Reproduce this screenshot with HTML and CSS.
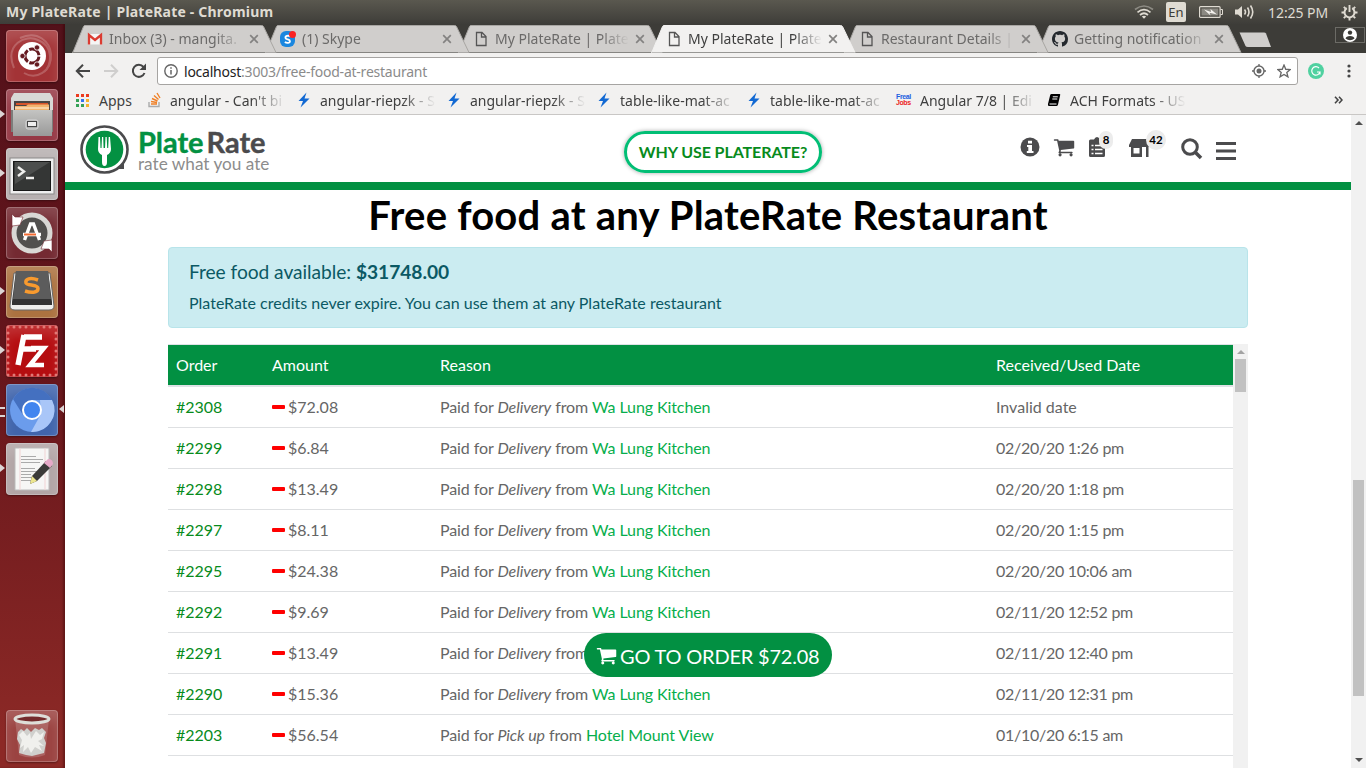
FILE: index.html
```html
<!DOCTYPE html>
<html lang="en">
<head>
<meta charset="utf-8">
<title>My PlateRate | PlateRate</title>
<link rel="stylesheet" href="styles.css">
</head>
<body>
<svg class="defs" width="0" height="0">
  <symbol id="tab" viewBox="0 0 206 28"><path d="M0 27.5 L1 27 L11.500 1.500 Q12 .5 13 .5 H189.500 Q191 .5 191.500 1.500 L204 27.5" /></symbol>
  <symbol id="close" viewBox="0 0 10 10"><path d="M1.200 1.200 L8.800 8.800 M8.800 1.200 L1.200 8.800" fill="none" stroke="currentColor" stroke-width="1.700"/></symbol>
  <symbol id="doc" viewBox="0 0 16 16"><path d="M3.500 1.500 H9 L13 5.500 V14.500 H3.500 Z M8.500 1.500 V6 H13" fill="none" stroke="#555" stroke-width="1.300"/></symbol>
  <symbol id="bolt" viewBox="0 0 14 16"><path d="M9.500 .5 L1.500 9 H6 L3.500 15.500 L12.500 6.500 H7.500 Z" fill="#1269d3"/></symbol>
  <symbol id="cart" viewBox="0 0 1792 1792"><path fill="currentColor" d="M704 1536q0 52-38 90t-90 38-90-38-38-90 38-90 90-38 90 38 38 90zm896 0q0 52-38 90t-90 38-90-38-38-90 38-90 90-38 90 38 38 90zm128-1088v512q0 24-16.500 42.500t-40.500 21.500l-1044 122q13 60 13 70 0 16-24 64h920q26 0 45 19t19 45-19 45-45 19h-1024q-26 0-45-19t-19-45q0-11 8-31.500t16-36 21.500-40 15.500-29.500l-177-823h-204q-26 0-45-19t-19-45 19-45 45-19h256q16 0 28.500 6.500t19.500 15.500 13 24.500 8 26 5.500 29.500 4.500 26h1201q26 0 45 19t19 45z"/></symbol>
</svg>

<header class="panel">
  <div class="panel-title">My PlateRate | PlateRate - Chromium</div>
  <div class="panel-tray">
    <svg class="wifi" width="20" height="14" viewBox="0 0 20 14" fill="none" stroke-width="1.700"><path d="M1 4.500 Q10-2.500 19 4.500" stroke="#8d8b84"/><path d="M3.500 7.300 Q10 2 16.500 7.300 M6 10 Q10 6.500 14 10" stroke="#dfdbd2"/><path d="M7.800 11.500 Q10 10 12.200 11.500 L10 13.800Z" fill="#dfdbd2"/></svg>
    <span class="lang">En</span>
    <svg class="battery" width="24" height="12" viewBox="0 0 24 12"><rect x=".6" y=".6" width="20.500" height="10.800" rx="1" fill="none" stroke="#dfdbd2" stroke-width="1.200"/><path d="M21.500 3.500h2v5h-2" fill="none" stroke="#dfdbd2"/><rect x="2.500" y="2.500" width="16.800" height="7" fill="#8b8982"/><path d="M5 3.500 L12 6 L11.500 3 L18 8.500 L10.500 6.800 L11.500 9.500Z" fill="#f4f2ee"/></svg>
    <svg class="sound" width="21" height="16" viewBox="0 0 21 16"><path d="M1 5.500H4L8 2V14L4 10.500H1Z" fill="#dfdbd2"/><path d="M10.500 5.500Q12.500 8 10.500 10.500M13.500 3.500Q16.500 8 13.500 12.500M16.500 1.500Q21 8 16.500 14.500" fill="none" stroke="#dfdbd2" stroke-width="1.600"/></svg>
    <span class="clock">12:25 PM</span>
    <svg class="gear" width="17" height="17" viewBox="0 0 17 17" fill="none" stroke="#dfdbd2"><path d="M5.800 4.200A5 5 0 1 0 11.200 4.200" stroke-width="2"/><path d="M8.500 1V8M.5 8.500H3M14 8.500H16.500M2.800 2.800L4.600 4.600M14.200 2.800L12.400 4.600M2.800 14.200L4.600 12.400M14.200 14.200L12.400 12.400M8.500 14V16.500" stroke-width="1.900"/></svg>
  </div>
</header>

<div class="desktop">
  <nav class="launcher">
    <div class="tile tile-dash"><svg viewBox="0 0 52 52"><g fill="none" stroke="#fff" opacity=".2"><path d="M8 38C-2 14 20 4 32 10C48 16 46 36 38 42" stroke-width="2"/><path d="M14 8C32 0 44 12 45 24C46 42 30 50 18 43" stroke-width="2"/></g><circle cx="26" cy="26" r="14" fill="#fff"/><circle cx="26" cy="26" r="7" fill="none" stroke="#651a20" stroke-width="3" stroke-dasharray="13 1.660" transform="rotate(5 26 26)"/><g fill="#651a20" stroke="#fff" stroke-width=".8"><circle cx="16.500" cy="26" r="2.700"/><circle cx="31" cy="17.500" r="2.700"/><circle cx="31" cy="34.500" r="2.700"/></g></svg></div>
    <div class="tile tile-files running"><svg viewBox="0 0 52 52"><defs><linearGradient id="metal" x2="0" y2="1"><stop stop-color="#c4c4c2"/><stop offset="1" stop-color="#999"/></linearGradient></defs><path d="M8 4H44L47 9V42H5V9Z" fill="#d8d8d6"/><path d="M8 12H44V22H8Z" fill="#4a4543"/><path d="M10 14H42V16H10Z" fill="#d8542a"/><path d="M9 17H20L22 15.500H43V22H9Z" fill="#f2b36e"/><path d="M9 19H43" stroke="#fff3df"/><path d="M5 21H47V43H5Z" fill="#7d7d7b"/><path d="M7 21H46V47H7Z" fill="url(#metal)"/><rect x="20" y="31" width="12" height="9" rx="2" fill="#aaa" stroke="#d9d9d9"/><rect x="21.500" y="32.500" width="9" height="5" fill="#eee" stroke="#444"/></svg></div>
    <div class="tile tile-term running"><svg viewBox="0 0 52 52"><rect x="4" y="10" width="44" height="36" fill="#eee" stroke="#8a8887"/><rect x="7.500" y="13.500" width="37" height="29" fill="#343635" stroke="#171717"/><path d="M9 14H44L9 36Z" fill="#fff" opacity=".12"/><path d="M12 19L18 23.500L12 28M20 30H28" fill="none" stroke="#f0f0ee" stroke-width="2.400"/></svg></div>
    <div class="tile tile-update"><svg viewBox="0 0 52 52"><circle cx="26" cy="26" r="18" fill="#51504e" stroke="#d9d8d5" stroke-width="5"/><path d="M6 19V7L9 10L17 10L14 18Z M46 33V45L43 42L35 42L38 34Z" fill="#fff" stroke="#742a32" stroke-width=".6"/><path d="M18.500 33L24.500 17H27.500L33.500 33M17 27.500H35" fill="none" stroke="#fff" stroke-width="3.400"/><path d="M18 27.500H30" stroke="#f26b32" stroke-width="2"/></svg></div>
    <div class="tile tile-sublime running"><svg viewBox="0 0 52 52"><path d="M8 7H44L48 40Q48 44 43 44H9Q4 44 4 40Z" fill="#eeeeec" stroke="#666"/><path d="M10 5H42L46 36V39H6V36Z" fill="#333"/><path d="M10 5H42L45 33H7Z" fill="#5c5c5c"/><path d="M32 14C24 11 19 13 20 17C21 20 32 18 32 22.500C32 27 25 27 19 25" fill="none" stroke="#f89a2e" stroke-width="3.500"/></svg></div>
    <div class="tile tile-filezilla running"><svg viewBox="0 0 52 52"><rect x="2" y="2" width="48" height="48" fill="none" stroke="#e17976" stroke-width="3" stroke-dasharray="0 6" stroke-linecap="round"/><path d="M18 12H36M14 24H30M18 10L12 40" fill="none" stroke="#fff" stroke-width="5.500"/><path d="M25 23H38L24 40H38" fill="none" stroke="#fff" stroke-width="4.500"/></svg></div>
    <div class="tile tile-chromium running active"><svg viewBox="0 0 52 52"><circle cx="26" cy="26" r="22" fill="#6b9cec"/><path d="M7 15A22 22 0 0 1 46 16H26L17 31Z" fill="#4470c0"/><path d="M46 16A22 22 0 0 1 25 48L35 30L34 16Z" fill="#a9c6f8"/><circle cx="26" cy="26" r="9" fill="#4285ef" stroke="#fff" stroke-width="2"/></svg></div>
    <div class="tile tile-gedit running"><svg viewBox="0 0 52 52"><path d="M9 5H43V47H9Z" fill="#f6f6f5" stroke="#bbb"/><path d="M14 5V47M39 5V47" stroke="#f1d3d4"/><path d="M15 13.500H30M15 16.500H37M15 19.500H34M15 25.500H29M15 28.500H36M15 31.500H25M15 34.500H28M15 37.500H25" stroke="#aaa"/><path d="M24 41L26 33L40 18L46 23L31 38Z" fill="#3b3b39"/><path d="M24 41L26 33L31 38Z" fill="#ede68e"/><path d="M38 20L42 16Q47 16 47 21L44 25Z" fill="#e6aac8"/></svg></div>
    <div class="tile tile-trash"><svg viewBox="0 0 52 52"><path d="M9 9L13 45Q26 50 39 45L43 9Z" fill="#fff" opacity=".17"/><path d="M12 22L15 19L18 21L21 18L25 22L29 18L33 20L36 18L40 22L38 28L40 33L38 43L30 45L26 46L20 45L13 43L14 35L11 29Z" fill="#d0d0cd"/><path d="M13 25L17 21L21 26L24 23L25 29L30 21L34 25L38 22L36 29L32 31L38 36L33 35L36 41L29 37L25 43L22 37L17 42L18 35L14 38L16 30Z" fill="#f0f0ed"/><ellipse cx="26" cy="9" rx="17" ry="4" fill="#742b2c" stroke="#deded9" stroke-width="3"/></svg></div>
  </nav>

  <main class="browser">
    <div class="tabstrip">
      <div class="tab t1"><svg class="tab-bg"><use href="#tab"/></svg><svg class="fav" viewBox="0 0 16 16"><path d="M1 3H15V13.500H1Z" fill="#f5f5f5"/><path d="M2 13.500V4L8 9L14 4V13.500" fill="none" stroke="#db3b31" stroke-width="2.300"/></svg><span class="tab-title">Inbox (3) - mangita.</span><svg class="x"><use href="#close"/></svg></div>
      <div class="tab t2"><svg class="tab-bg"><use href="#tab"/></svg><svg class="fav" viewBox="0 0 16 16"><rect width="15" height="16" rx="6" fill="#1b87df"/><path d="M10.500 5.500C8 4 5 5 5.500 7C6 9 10 8 10 10.300C10 12 7 12.500 4.800 11" fill="none" stroke="#fff" stroke-width="1.800"/><circle cx="12.500" cy="3.500" r="3.500" fill="#fb2323"/></svg><span class="tab-title">(1) Skype</span><svg class="x"><use href="#close"/></svg></div>
      <div class="tab t3"><svg class="tab-bg"><use href="#tab"/></svg><svg class="fav"><use href="#doc"/></svg><span class="tab-title">My PlateRate | Plate</span><svg class="x"><use href="#close"/></svg></div>
      <div class="tab t4 current"><svg class="tab-bg"><use href="#tab"/></svg><svg class="fav"><use href="#doc"/></svg><span class="tab-title">My PlateRate | Plate</span><svg class="x"><use href="#close"/></svg></div>
      <div class="tab t5"><svg class="tab-bg"><use href="#tab"/></svg><svg class="fav"><use href="#doc"/></svg><span class="tab-title">Restaurant Details |</span><svg class="x"><use href="#close"/></svg></div>
      <div class="tab t6"><svg class="tab-bg"><use href="#tab"/></svg><svg class="fav" viewBox="0 0 16 16"><path fill="#24292e" d="M8 0C3.580 0 0 3.580 0 8c0 3.540 2.290 6.530 5.470 7.590.4.070.55-.17.55-.38 0-.19-.01-.82-.01-1.490-2.010.37-2.530-.49-2.690-.94-.09-.23-.48-.94-.82-1.130-.28-.15-.68-.52-.01-.53.63-.01 1.080.58 1.230.82.72 1.210 1.870.87 2.330.66.070-.52.28-.87.51-1.070-1.780-.2-3.640-.89-3.640-3.950 0-.87.31-1.590.82-2.150-.08-.2-.36-1.020.08-2.120 0 0 .67-.21 2.200.82.64-.18 1.320-.27 2-.27s1.360.09 2 .27c1.530-1.040 2.200-.82 2.200-.82.44 1.100.16 1.920.08 2.120.51.56.82 1.270.82 2.150 0 3.070-1.870 3.750-3.650 3.950.29.25.54.73.54 1.480 0 1.070-.01 1.930-.01 2.200 0 .21.15.46.55.38A8 8 0 0 0 16 8c0-4.420-3.580-8-8-8z"/></svg><span class="tab-title">Getting notification</span><svg class="x"><use href="#close"/></svg></div>
      <svg class="newtab" width="34" height="16" viewBox="0 0 34 16"><path d="M1.500 .5H26Q27.500 .5 28 1.500L33 15H10Q8 15 7.500 14Z" fill="#d0cecc"/></svg>
      <div class="profile"><svg width="14" height="14" viewBox="0 0 14 14"><circle cx="7" cy="7" r="7" fill="#fff"/><circle cx="7" cy="4.600" r="2.200" fill="#3c3b37"/><path d="M2.500 10.500Q3 8 7 8T11.500 10.500Q9.500 12.300 7 12.300T2.500 10.500Z" fill="#3c3b37"/></svg></div>
    </div>

    <div class="toolbar">
      <svg class="nav-icon" viewBox="0 0 16 16"><path d="M15 8H2M8 1.800L1.800 8L8 14.200" fill="none" stroke="#454545" stroke-width="2"/></svg>
      <svg class="nav-icon" viewBox="0 0 16 16"><path d="M1 8H14M8 1.800L14.200 8L8 14.200" fill="none" stroke="#cfcecd" stroke-width="2"/></svg>
      <svg class="nav-icon" viewBox="0 0 16 16"><path d="M13.500 10A6 6 0 1 1 12.500 4" fill="none" stroke="#454545" stroke-width="2"/><path d="M15 .5V7H8.500Z" fill="#454545"/></svg>
      <div class="omnibox">
        <svg width="14" height="14" viewBox="0 0 14 14"><circle cx="7" cy="7" r="6.200" fill="none" stroke="#666" stroke-width="1.400"/><path d="M7 6V10.500M7 3.200V4.700" stroke="#666" stroke-width="1.500"/></svg>
        <div class="url"><b>localhost</b>:3003/free-food-at-restaurant</div>
        <svg class="geo" width="14" height="14" viewBox="0 0 14 14"><circle cx="7" cy="7" r="5" fill="none" stroke="#666" stroke-width="1.400"/><circle cx="7" cy="7" r="2.500" fill="#666"/><path d="M7 0V2M7 12V14M0 7H2M12 7H14" stroke="#666" stroke-width="1.300"/></svg>
        <svg width="14" height="14" viewBox="0 0 16 16"><path d="M8 1.200L10 6L15.200 6.300L11.200 9.600L12.500 14.700L8 11.900L3.500 14.700L4.800 9.600L.8 6.300L6 6Z" fill="none" stroke="#666" stroke-width="1.500"/></svg>
      </div>
      <svg class="grammarly" width="16" height="16" viewBox="0 0 16 16"><circle cx="8" cy="8" r="8" fill="#50d1a0"/><path d="M11 5A4.200 4.200 0 1 0 12 9H9M12 8.500V11.500" fill="none" stroke="#fff" stroke-width="1.200"/></svg>
      <svg class="dots" width="4" height="14" viewBox="0 0 4 14" fill="#454545"><circle cx="2" cy="2" r="1.600"/><circle cx="2" cy="7" r="1.600"/><circle cx="2" cy="12" r="1.600"/></svg>
    </div>

    <div class="bookmarks">
      <div class="bm bm-apps"><svg width="13" height="13" viewBox="0 0 13 13"><path d="M0 0h3v3H0z M5 0h3v3H5z M10 0h3v3h-3z" fill="#ec3b1f"/><path d="M0 5h3v3H0z M0 10h3v3H0z M5 10h3v3H5z" fill="#35a156"/><path d="M5 5h3v3H5z" fill="#3373f0"/><path d="M10 5h3v3h-3z M10 10h3v3h-3z" fill="#f5b22c"/></svg><span>Apps</span></div>
      <div class="bm bm-so"><svg width="14" height="16" viewBox="0 0 14 16" fill="none"><path d="M1 10V14.500H11V10" stroke="#aaa" stroke-width="1.400"/><path d="M3 12H9M3 9.500L9 10.500M4 6.500L9.500 9M6 3.500L10.500 7.500M9 1L12 6" stroke="#f08027" stroke-width="1.400"/></svg><span class="fade">angular - Can't bi</span></div>
      <div class="bm"><svg width="14" height="16"><use href="#bolt"/></svg><span class="fade">angular-riepzk - S</span></div>
      <div class="bm"><svg width="14" height="16"><use href="#bolt"/></svg><span class="fade">angular-riepzk - S</span></div>
      <div class="bm"><svg width="14" height="16"><use href="#bolt"/></svg><span class="fade">table-like-mat-ac</span></div>
      <div class="bm"><svg width="14" height="16"><use href="#bolt"/></svg><span class="fade">table-like-mat-ac</span></div>
      <div class="bm bm-jobs"><span class="jobs"><i>Freal</i><i>Jobs</i></span><span class="fade">Angular 7/8 | Edi</span></div>
      <div class="bm bm-ach"><svg width="14" height="14" viewBox="0 0 14 14"><path d="M4.500 1H12.500Q13.500 1 13.200 2L11 11.500Q10.500 13 9.500 13H2Q.5 13 1 11L3.200 2Q3.500 1 4.500 1Z" fill="#000"/><path d="M5.800 3.800H10.800M5.300 6H10.300M2.500 11H9.500" stroke="#fff"/></svg><span class="fade">ACH Formats - US</span></div>
      <svg class="more" width="9" height="8" viewBox="0 0 9 8"><path d="M1 .8L4 4L1 7.200M5 .8L8 4L5 7.200" fill="none" stroke="#444" stroke-width="1.600"/></svg>
    </div>

    <div class="viewport">
      <div class="page">
        <header class="site-header">
          <div class="brand">
            <svg width="50" height="50" viewBox="0 0 50 50"><path d="M40 39H44V44H33Z" fill="#4b4b4d"/><circle cx="24.500" cy="24.500" r="23" fill="#fff" stroke="#4b4b4d" stroke-width="2.600"/><circle cx="24.500" cy="24.500" r="18.800" fill="#039142"/><path d="M18.500 12H20L20.500 23H21.500L22 12H23.200L23.600 23H25L25.500 12H26.700L27.200 23H28.200L28.700 12H30L31 24Q31 28 27 30V37Q27 41 24.500 41T22 37V30Q18 28 18 24Z" fill="#fff"/></svg>
            <div class="brand-text"><div class="brand-name"><span>Plate</span>Rate</div><div class="brand-tag">rate what you ate</div></div>
          </div>
          <a class="why">WHY USE PLATERATE?</a>
          <div class="site-icons">
            <svg class="i-info" width="20" height="20" viewBox="0 0 20 20"><circle cx="10" cy="10" r="9.500" fill="currentColor"/><path d="M8 3.800H12V6.500H8Z M7 8H12V14H13.500V16H6.800V14H8.300V10H7Z" fill="#fff"/></svg>
            <svg class="i-cart" width="22" height="22"><use href="#cart"/></svg>
            <div class="counter c-orders"><svg width="16" height="20" viewBox="0 0 16 20"><path d="M0 4Q0 2.500 1.500 2.500H5Q6 0 8 0T11 2.500H14.500Q16 2.500 16 4V18.500Q16 20 14.500 20H1.500Q0 20 0 18.500Z" fill="currentColor"/><path d="M2.500 8.500H4.500M6 8.500H13.500M2.500 12.500H4.500M6 12.500H13.500M2.500 16.500H4.500M6 16.500H13.500" stroke="#fff" stroke-width="1.400"/></svg><span class="badge">8</span></div>
            <div class="counter c-store"><svg width="22" height="18" viewBox="0 0 22 18"><path d="M3 0H19L22 6V8H0V6Z M2 8H13V18H2Z M17 8H19.500V18H17Z" fill="currentColor"/><path d="M4.500 9H10.500V14.500H4.500Z" fill="#fff"/></svg><span class="badge">42</span></div>
            <svg class="i-search" width="22" height="22" viewBox="0 0 22 22"><circle cx="9" cy="9" r="7.300" fill="none" stroke="currentColor" stroke-width="3"/><path d="M14.500 14.500L20 20" stroke="currentColor" stroke-width="3.500"/></svg>
            <svg class="i-menu" width="20" height="18" viewBox="0 0 20 18"><path d="M0 1.500H20M0 9H20M0 16.500H20" stroke="currentColor" stroke-width="3"/></svg>
          </div>
        </header>

        <section class="content">
          <h1>Free food at any PlateRate Restaurant</h1>
          <div class="alert">
            <div class="alert-head">Free food available: <b>$31748.00</b></div>
            <div>PlateRate credits never expire. You can use them at any PlateRate restaurant</div>
          </div>
          <div class="table-wrap">
            <table>
              <colgroup><col class="w-order"><col class="w-amount"><col class="w-reason"><col></colgroup>
              <thead><tr><th>Order</th><th>Amount</th><th>Reason</th><th>Received/Used Date</th></tr></thead>
              <tbody>
                <tr><td class="num">#2308</td><td class="minus">$72.08</td><td class="reason">Paid for <em>Delivery</em> from <a>Wa Lung Kitchen</a></td><td>Invalid date</td></tr>
                <tr><td class="num">#2299</td><td class="minus">$6.84</td><td class="reason">Paid for <em>Delivery</em> from <a>Wa Lung Kitchen</a></td><td class="date">02/20/20 1:26 pm</td></tr>
                <tr><td class="num">#2298</td><td class="minus">$13.49</td><td class="reason">Paid for <em>Delivery</em> from <a>Wa Lung Kitchen</a></td><td class="date">02/20/20 1:18 pm</td></tr>
                <tr><td class="num">#2297</td><td class="minus">$8.11</td><td class="reason">Paid for <em>Delivery</em> from <a>Wa Lung Kitchen</a></td><td class="date">02/20/20 1:15 pm</td></tr>
                <tr><td class="num">#2295</td><td class="minus">$24.38</td><td class="reason">Paid for <em>Delivery</em> from <a>Wa Lung Kitchen</a></td><td class="date">02/20/20 10:06 am</td></tr>
                <tr><td class="num">#2292</td><td class="minus">$9.69</td><td class="reason">Paid for <em>Delivery</em> from <a>Wa Lung Kitchen</a></td><td class="date">02/11/20 12:52 pm</td></tr>
                <tr><td class="num">#2291</td><td class="minus">$13.49</td><td class="reason">Paid for <em>Delivery</em> from</td><td class="date">02/11/20 12:40 pm</td></tr>
                <tr><td class="num">#2290</td><td class="minus">$15.36</td><td class="reason">Paid for <em>Delivery</em> from <a>Wa Lung Kitchen</a></td><td class="date">02/11/20 12:31 pm</td></tr>
                <tr><td class="num">#2203</td><td class="minus">$56.54</td><td class="reason">Paid for <em>Pick up</em> from <a>Hotel Mount View</a></td><td class="date">01/10/20 6:15 am</td></tr>
              </tbody>
            </table>
            <div class="scrollbar inner"><span class="arrow up"></span><span class="thumb"></span></div>
          </div>
        </section>
        <a class="order-btn"><svg width="21" height="21"><use href="#cart"/></svg><span>GO TO ORDER $72.08</span></a>
      </div>
      <div class="scrollbar outer"><span class="arrow up"></span><span class="thumb"></span><span class="arrow down"></span></div>
    </div>
  </main>
</div>
</body>
</html>
```
FILE: styles.css
```css
* { box-sizing: border-box; }
body {
  margin: 0;
  width: 1366px;
  height: 768px;
  overflow: hidden;
  display: flex;
  flex-direction: column;
  font-family: "Noto Sans", sans-serif;
  background: #fff;
}
svg { display: block; flex: none; }
.defs { position: absolute; }

/* Desktop panel */
.panel {
  height: 24px;
  flex: none;
  display: flex;
  justify-content: space-between;
  align-items: center;
  padding: 0 8px 0 6px;
  background: linear-gradient(#5a584f, #3e3d39);
  color: #dfdbd2;
}
.panel-title { font: bold 14px/24px "Noto Sans", sans-serif; letter-spacing: .2px; }
.panel-tray { display: flex; align-items: center; }
.lang {
  width: 20px;
  height: 20px;
  margin: 0 13px 0 12px;
  background: #dfdbd2;
  border-radius: 2px;
  color: #3c3b37;
  font-size: 13px;
  line-height: 20px;
  text-align: center;
}
.sound { margin-left: 11px; }
.clock { width: 60px; margin: 0 13px 0 13px; font-size: 14px; letter-spacing: -.05px; white-space: nowrap; }

.desktop { flex: 1; display: flex; min-height: 0; }

/* Launcher */
.launcher {
  width: 65px;
  flex: none;
  display: flex;
  flex-direction: column;
  gap: 7px;
  padding: 6px 0 6px 6px;
  background: linear-gradient(#53111a, #65151b 45%, #8c2926 96%);
  box-shadow: inset -2px 0 2px rgba(40, 0, 0, .35);
}
.tile {
  position: relative;
  width: 52px;
  height: 52px;
  border-radius: 4px;
  box-shadow: inset 0 0 0 1px rgba(255, 255, 255, .22), inset 0 10px 12px rgba(255, 255, 255, .15), 0 1px 2px rgba(0, 0, 0, .35);
}
.tile svg { width: 52px; height: 52px; }
.tile-dash { background: #a33336; }
.tile-files { background: #963845; }
.tile-term { background: #b7b0b0; }
.tile-update { background: #742a32; }
.tile-sublime { background: #ac7240; }
.tile-filezilla { background: #b50d10; }
.tile-chromium { background: #4165ac; }
.tile-gedit { background: #b2a5a6; }
.tile-trash { background: #9b4341; margin-top: auto; }
.running::before, .active::after {
  content: "";
  position: absolute;
  top: 21px;
  left: -6px;
  border: solid transparent;
  border-width: 4px 0 4px 5px;
  border-left-color: #dcd5d5;
}
.active::before { height: 6px; width: 5px; top: 23px; border: solid #dcd5d5; border-width: 2px 0; }
.active::after { left: 53px; border-width: 4px 5px 4px 0; border-right-color: #dcd5d5; }

/* Browser frame */
.browser { flex: 1; display: flex; flex-direction: column; min-width: 0; }
.tabstrip {
  height: 29px;
  flex: none;
  display: flex;
  padding: 1px 0 0 7px;
  background: #3d3c38;
  color: #6b6a69;
}
.tab {
  position: relative;
  width: 204px;
  height: 28px;
  margin-right: -11px;
  flex: none;
  display: flex;
  align-items: center;
  padding: 0 0 0 15px;
}
.t1 { z-index: 6; } .t2 { z-index: 5; } .t3 { z-index: 4; } .t5 { z-index: 2; } .t6 { z-index: 1; }
.tab.current { z-index: 7; color: #3f3f3f; }
.tab-bg { position: absolute; left: 0; top: 0; width: 206px; height: 28px; fill: #d0cecc; stroke: #a8a6a3; }
.current .tab-bg { fill: #f2f1f0; stroke: #f2f1f0; }
.fav { width: 16px; height: 16px; position: relative; }
.tab-title {
  position: relative;
  width: 134px;
  margin-left: 6px;
  white-space: nowrap;
  font-size: 14px;
  line-height: 24px;
  -webkit-mask-image: linear-gradient(90deg, #000 106px, transparent 134px);
  mask-image: linear-gradient(90deg, #000 106px, transparent 134px);
}
.x { position: relative; width: 10px; height: 10px; margin-left: 6px; color: #838281; }
.newtab { margin: 7px 0 0 8px; position: relative; }
.profile {
  width: 30px;
  height: 16px;
  margin: 2px 1px 0 auto;
  border: 1px solid #6c6b66;
  display: flex;
  justify-content: center;
  align-items: center;
}

.toolbar {
  height: 33px;
  flex: none;
  display: flex;
  align-items: center;
  padding: 3px 15px 0 10px;
  background: #f2f1f0;
}
.nav-icon { width: 16px; height: 16px; margin-right: 12px; }
.omnibox {
  height: 28px;
  flex: 1;
  margin-left: -2px;
  display: flex;
  align-items: center;
  padding: 0 6px;
  border: 1px solid #a6a4a2;
  border-radius: 3px;
  background: #fff;
}
.url { flex: 1; margin-left: 6px; font-size: 14px; letter-spacing: -.23px; color: #8b8b8b; }
.url b { font-weight: normal; color: #222; }
.geo { margin-right: 11px; }
.grammarly { margin-left: 10px; }
.dots { margin-left: 23px; }

.bookmarks {
  height: 29px;
  flex: none;
  display: flex;
  align-items: center;
  padding-left: 11px;
  background: #f2f1f0;
  border-bottom: 1px solid #c9c7c5;
  font-size: 14px;
  color: #3f3f3f;
}
.bm { width: 150px; display: flex; align-items: center; white-space: nowrap; }
.bm svg { margin-right: 9px; }
.bm-apps { width: 72px; }
.bm-apps svg { margin-right: 10px; }
.bm-so { width: 149px; }
.bm-so svg { margin-right: 8px; }
.bm-jobs { width: 150px; }
.fade {
  width: 116px;
  -webkit-mask-image: linear-gradient(90deg, #000 82px, transparent 116px);
  mask-image: linear-gradient(90deg, #000 82px, transparent 116px);
}
.jobs { width: 16px; margin: 0 8px 0 -1px; font: bold 7px/6px "Liberation Sans", sans-serif; letter-spacing: -.4px; color: #1d5fe0; }
.jobs i { display: block; font-style: normal; }
.jobs i + i { color: #ec2525; }
.more { margin: 0 23px 0 auto; }

/* Page */
.viewport { flex: 1; display: flex; min-height: 0; }
.page {
  position: relative;
  width: 1286px;
  overflow: hidden;
  font-family: Lato, sans-serif;
  font-size: 16px;
  color: #666;
}
.site-header {
  height: 75px;
  display: grid;
  grid-template-columns: 559px 198px 1fr;
  border-bottom: 8px solid #029042;
}
.brand { display: flex; padding: 10px 0 0 15px; gap: 8px; }
.brand-name { margin-top: 1px; font: bold 29px/32px Lato, sans-serif; letter-spacing: -.05px; color: #4b4b4d; -webkit-text-stroke: .4px currentColor; }
.brand-name span { color: #039142; margin-right: 3px; }
.brand-tag { font-size: 17.200px; line-height: 20px; margin-top: -4px; color: #8c8c8c; }
.why {
  height: 42px;
  margin-top: 16px;
  border: 3px solid #02be75;
  border-radius: 21px;
  box-shadow: 0 0 4px rgba(0, 0, 0, .35);
  font-size: 16px;
  font-weight: bold;
  letter-spacing: -.08px;
  line-height: 36px;
  text-align: center;
  white-space: nowrap;
  color: #078b1c;
}
.site-icons { display: flex; padding-left: 198px; color: #4b4b4d; }
.i-info { margin-top: 22px; }
.i-cart { margin: 21px 0 0 13px; }
.counter { position: relative; }
.c-orders { margin: 22px 0 0 14px; }
.c-store { margin: 24px 0 0 24px; }
.badge {
  position: absolute;
  left: 10px;
  top: -6px;
  width: 14px;
  height: 18px;
  border-radius: 9px;
  background: #ececec;
  color: #000;
  font-size: 11.500px;
  font-weight: bold;
  line-height: 18px;
  text-align: center;
}
.c-store .badge { left: 17px; top: -9px; width: 20px; height: 20px; line-height: 20px; border-radius: 10px; }
.i-search { margin: 23px 0 0 30px; }
.i-menu { margin: 27px 0 0 13px; }

.content { width: 1080px; margin: 0 auto; }
h1 { margin: 0; padding-top: 1px; height: 57px; text-align: center; font-size: 40px; font-weight: bold; letter-spacing: .22px; line-height: 48px; color: #000; }
.alert {
  height: 81px;
  padding: 12px 20px;
  border: 1px solid #b8e4ea;
  border-radius: 4px;
  background: #cbecf1;
  color: #0b5964;
  line-height: 24px;
}
.alert-head { font-size: 19.200px; letter-spacing: -.05px; margin-bottom: 7px; }
.table-wrap { display: flex; height: 424px; margin-top: 16px; overflow: hidden; }
table { width: 1065px; height: 0; table-layout: fixed; border-collapse: separate; border-spacing: 0; }
.w-order { width: 96px; } .w-amount { width: 168px; } .w-reason { width: 556px; }
th, td { padding: 0 8px 2px; text-align: left; }
th {
  height: 43px;
  background: #029042;
  background-clip: padding-box;
  color: #fff;
  font-weight: normal;
  border-top: 1px solid #dee2e6;
  border-bottom: 2px solid #dee2e6;
}
td { height: 41px; border-bottom: 1px solid #dee0e2; }
.num { color: #078b1c; }
.reason { letter-spacing: -.09px; }
.date { letter-spacing: -.27px; }
td a { color: #07ae4c; }
.minus::before {
  content: "";
  display: inline-block;
  width: 13px;
  height: 4px;
  margin-right: 3px;
  border-radius: 1px;
  background: #f00;
  vertical-align: 4px;
}

.scrollbar { width: 15px; flex: none; display: flex; flex-direction: column; align-items: center; background: #f1f1f1; }
.arrow { border: solid transparent; border-width: 0 4px 4px; border-bottom-color: #505050; }
.arrow.down { border-width: 4px 4px 0; border-top-color: #505050; margin: auto 0 6px; }
.thumb { width: 11px; background: #c1c1c1; }
.inner .arrow { margin: 6px 0 5px; border-bottom-color: #a3a3a3; }
.inner .thumb { height: 33px; }
.outer .up { margin-top: 6px; }
.outer .thumb { height: 216px; margin-top: 355px; }

.order-btn {
  position: absolute;
  left: 519px;
  top: 518px;
  width: 248px;
  height: 44px;
  display: flex;
  align-items: center;
  gap: 3px;
  padding: 1px 0 0 12px;
  border-radius: 22px;
  background: #029042;
  color: #fff;
  font-size: 20px;
  letter-spacing: -.2px;
  white-space: nowrap;
}
```
